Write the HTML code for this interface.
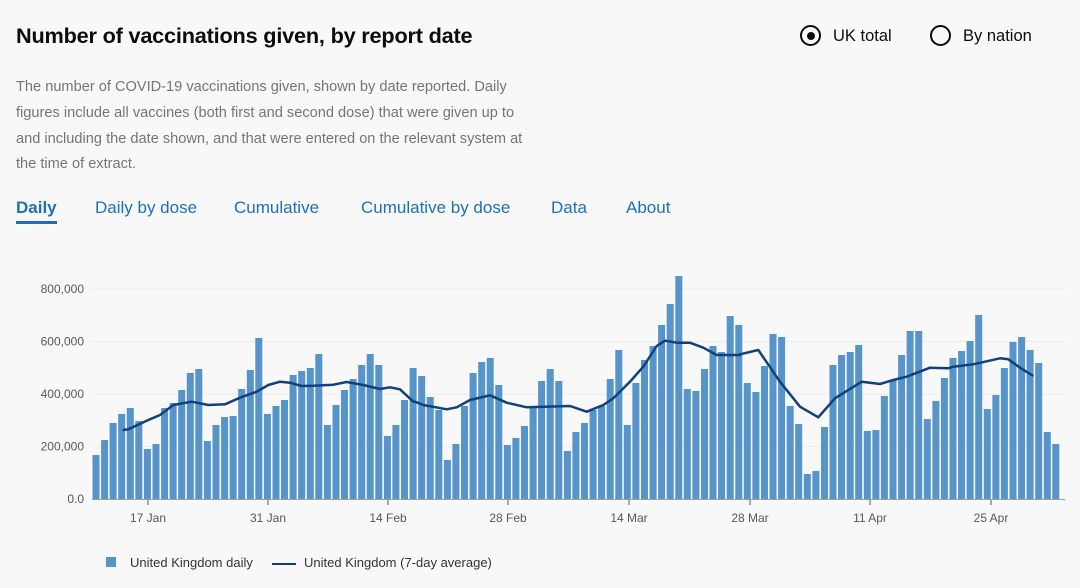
<!DOCTYPE html>
<html><head><meta charset="utf-8"><style>
body{margin:0;width:1080px;height:588px;background:#f8f8f8;font-family:"Liberation Sans",sans-serif;position:relative;overflow:hidden}
.a{position:absolute;white-space:nowrap}
h1{position:absolute;left:16px;top:23px;margin:0;font-size:21.7px;font-weight:bold;color:#0b0c0c;letter-spacing:-0.2px}
p{position:absolute;left:16px;top:75px;margin:0;width:560px;font-size:14.6px;line-height:25.8px;color:#6f777b;white-space:nowrap}
.tab{position:absolute;top:198px;font-size:17px;color:#1d70b8}
.radio{position:absolute;top:25px;width:21px;height:21px;border:2px solid #0b0c0c;border-radius:50%;box-sizing:border-box}
.rl{position:absolute;top:27px;font-size:16.5px;color:#0b0c0c}
</style></head><body>
<h1>Number of vaccinations given, by report date</h1>
<div class="radio" style="left:800px"><div style="position:absolute;left:4.5px;top:4.5px;width:8px;height:8px;border-radius:50%;background:#0b0c0c"></div></div>
<div class="rl a" style="left:833px">UK total</div>
<div class="radio" style="left:930px"></div>
<div class="rl a" style="left:963px">By nation</div>
<p>The number of COVID-19 vaccinations given, shown by date reported. Daily<br>figures include all vaccines (both first and second dose) that were given up to<br>and including the date shown, and that were entered on the relevant system at<br>the time of extract.</p>
<div class="tab a" style="left:16px;font-weight:bold">Daily</div>
<div class="a" style="left:16px;top:221px;width:41px;height:3px;background:#1d70b8"></div>
<div class="tab a" style="left:95px">Daily by dose</div>
<div class="tab a" style="left:234px">Cumulative</div>
<div class="tab a" style="left:361px">Cumulative by dose</div>
<div class="tab a" style="left:551px">Data</div>
<div class="tab a" style="left:626px">About</div>
<svg id="c" width="1080" height="588" style="position:absolute;left:0;top:0" font-family="Liberation Sans, sans-serif" font-size="12" fill="#505a5f"></svg>
<div class="a" style="left:106px;top:557px;width:10px;height:10px;background:#5694ca"></div>
<div class="a" style="left:130px;top:555px;font-size:13px;color:#333">United Kingdom daily</div>
<div class="a" style="left:272px;top:563px;width:24px;height:2px;background:#12407c"></div>
<div class="a" style="left:304px;top:555px;font-size:13px;color:#333">United Kingdom (7-day average)</div>
<script>
var h=[44,59,76,85,91,78,50,55,91,96,109,126,130,58,74,82,83,110,129,161,85,93,99,124,128,131,145,74,94,109,120,134,145,134,63,74,99,131,
123,102,89,39,55,93,126,137,141,114,54,61,73,91,118,130,118,48,67,76,89,93,120,149,74,116,139,153,174,195,223,110,108,130,153,147,183,174,
116,107,133,165,162,93,75,25,28,72,134,144,147,154,68,69,103,119,144,168,168,80,98,121,141,148,158,184,90,104,131,157,162,149,136,67,55];
var s='';
var ys=[[0,"0.0"],[200,"200,000"],[400,"400,000"],[600,"600,000"],[800,"800,000"]];
ys.forEach(function(v){var y=499-v[0]*52.5/200;if(v[0])s+='<line x1="92" x2="1065" y1="'+y+'" y2="'+y+'" stroke="#ececec"/>';s+='<text x="84" y="'+(y+4)+'" text-anchor="end">'+v[1]+'</text>';});
for(var i=0;i<h.length;i++){var x=96+8.57*i-3.5;s+='<rect x="'+x.toFixed(1)+'" y="'+(499-h[i])+'" width="7" height="'+h[i]+'" fill="#5694ca"/>';}
s+='<line x1="92" x2="1065" y1="499.5" y2="499.5" stroke="#a0a0a0"/>';
[[148,"17 Jan"],[268,"31 Jan"],[388,"14 Feb"],[508,"28 Feb"],[629,"14 Mar"],[750,"28 Mar"],[870,"11 Apr"],[991,"25 Apr"]].forEach(function(t){s+='<line x1="'+t[0]+'" x2="'+t[0]+'" y1="500" y2="505" stroke="#505a5f"/><text x="'+t[0]+'" y="522" text-anchor="middle">'+t[1]+'</text>';});
var z1=[[128,480],[145,478],[200,452],[240,435],[280,405],[335,395],[385,405],[435,403],[480,383],[530,365],[565,345],[600,335],[630,338],[665,348],[700,347],[760,344],[800,336],[850,345],[900,357],[930,352],[960,358],[1000,395]];
var z2=[[15,395],[40,405],[110,418],[140,412],[180,390],[240,376],[290,398],[350,412],[480,408],[530,425],[580,405],[610,385],[660,335],[700,290],[740,228],[765,212],[800,218],[840,218],[880,233],[920,255],[990,255]];
var z3=[[0,253],[55,240],[120,335],[180,410],[235,442],[285,385],[365,335],[420,342],[460,330],[500,320],[570,293],[625,295],[640,290],[700,283],[780,265],[805,268],[840,293],[880,318]];
var pts=[];
z1.forEach(function(p){pts.push((80+p[0]/3).toFixed(1)+','+(270+p[1]/3).toFixed(1))});
z2.forEach(function(p){pts.push((410+p[0]/3).toFixed(1)+','+(270+p[1]/3).toFixed(1))});
z3.forEach(function(p){pts.push((740+p[0]/3).toFixed(1)+','+(270+p[1]/3).toFixed(1))});
s+='<polyline points="'+pts.join(' ')+'" fill="none" stroke="#12407c" stroke-width="2.5" stroke-linejoin="round"/>';
document.getElementById('c').innerHTML=s;
</script>
</body></html>
